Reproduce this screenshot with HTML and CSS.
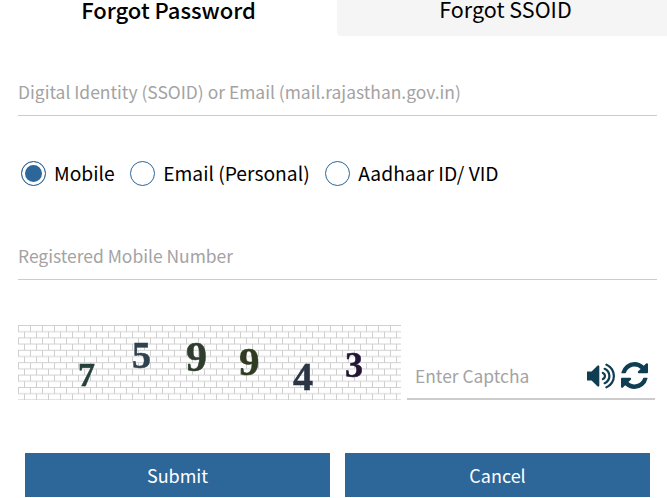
FILE: index.html
```html
<!DOCTYPE html>
<html lang="en">
<head>
  <meta charset="UTF-8" />
  <meta name="viewport" content="width=device-width, initial-scale=1.0"/>
  <title>Forgot Password</title>
  <link rel="stylesheet" href="styles.css">
</head>
<body>

  <div class="tabs">
    <div class="tab active">Forgot Password</div>
    <div class="tab other">Forgot SSOID</div>
  </div>

  <form class="form">
    <input type="text" class="field ssoid" placeholder="Digital Identity (SSOID) or Email (mail.rajasthan.gov.in)" />

    <div class="radios">
      <label class="radio"><input type="radio" name="mode" checked /><span class="dot"></span>Mobile</label>
      <label class="radio"><input type="radio" name="mode" /><span class="dot"></span>Email (Personal)</label>
      <label class="radio"><input type="radio" name="mode" /><span class="dot"></span>Aadhaar ID/ VID</label>
    </div>

    <input type="text" class="field mobile" placeholder="Registered Mobile Number" />

    <div class="captcha-row">
      <div class="captcha">
        <svg class="bricks" width="383" height="75">
          <defs>
            <pattern id="brick" width="24" height="12.4" patternUnits="userSpaceOnUse">
              <path d="M0 .5H24M0 6.7H24M.5 .5V6.7M12.5 .5V6.7M6.5 6.7V12.4M18.5 6.7V12.4" fill="none" stroke="#cfcfcf" stroke-width="1"/>
            </pattern>
          </defs>
          <rect width="383" height="75" fill="#fff"/>
          <rect width="383" height="75" fill="url(#brick)"/>
        </svg>
        <span class="digit d1">7</span>
        <span class="digit d2">5</span>
        <span class="digit d3">9</span>
        <span class="digit d4">9</span>
        <span class="digit d5">4</span>
        <span class="digit d6">3</span>
      </div>
      <div class="captcha-input">
        <input type="text" placeholder="Enter Captcha" />
        <svg class="icon" width="28" height="26" viewBox="128 160 1600 1472"><path d="M832 352v1088q0 26-19 45t-45 19-45-19l-333-333h-262q-26 0-45-19t-19-45v-384q0-26 19-45t45-19h262l333-333q19-19 45-19t45 19 19 45zm384 544q0 76-42.5 141.5t-112.5 93.5q-10 5-25 5-26 0-45-18.5t-19-45.5q0-21 12-35.5t29-25 34-23 29-36 12-56.5-12-56.5-29-36-34-23-29-25-12-35.5q0-27 19-45.5t45-18.5q15 0 25 5 70 27 112.5 93t42.5 142zm256 0q0 153-85 282.5t-225 188.5q-13 5-25 5-27 0-46-19t-19-45q0-39 39-59 56-29 76-44 74-54 115.5-135.5t41.5-173.5-41.5-173.5-115.5-135.5q-20-15-76-44-39-20-39-59 0-26 19-45t45-19q13 0 26 5 140 59 225 188.5t85 282.5zm256 0q0 230-127 422.5t-338 283.5q-13 5-26 5-26 0-45-19t-19-45q0-36 39-59 7-4 22.5-10.5t22.5-10.5q46-25 82-51 123-91 192-227t69-289-69-289-192-227q-36-26-82-51-7-4-22.5-10.5t-22.5-10.5q-39-23-39-59 0-26 19-45t45-19q13 0 26 5 211 91 338 283.5t127 422.5z"/></svg>
        <svg class="icon" width="27" height="27" viewBox="128 128 1536 1536"><path d="M1639 1056q0 5-1 7-64 268-268 434.5t-478 166.5q-146 0-282.5-55t-243.5-157l-129 129q-19 19-45 19t-45-19-19-45v-448q0-26 19-45t45-19h448q26 0 45 19t19 45-19 45l-137 137q71 66 161 102t187 36q134 0 250-65t186-179q11-17 53-117 8-23 30-23h192q13 0 22.5 9.5t9.5 22.5zm25-800v448q0 26-19 45t-45 19h-448q-26 0-45-19t-19-45 19-45l138-138q-148-137-349-137-134 0-250 65t-186 179q-11 17-53 117-8 23-30 23h-199q-13 0-22.5-9.5t-9.5-22.5v-7q65-268 270-434.5t480-166.5q146 0 284 55.5t245 156.5l130-129q19-19 45-19t45 19 19 45z"/></svg>
      </div>
    </div>

    <div class="buttons">
      <button type="button" class="btn">Submit</button>
      <button type="button" class="btn">Cancel</button>
    </div>
  </form>

</body>
</html>
```

FILE: styles.css
```css
body {
  margin: 0;
  font-family: "Noto Sans CJK SC", "Noto Sans", sans-serif;
  background: #fff;
  color: #000;
  overflow: hidden;
}

.tabs {
  display: grid;
  grid-template-columns: 337px 1fr;
  height: 36px;
}

.tab {
  text-align: center;
  font-size: 22px;
  line-height: 18px;
}

.tab.other {
  background: #f5f5f5;
  border-radius: 0 0 0 4px;
  padding-left: 7px;
  font-size: 21.5px;
}

.tab.active {
  font-weight: 500;
}

.form {
  padding: 0 10px 0 18px;
}

.field {
  display: block;
  width: 100%;
  box-sizing: border-box;
  height: 44px;
  padding: 0 0 5px;
  border: none;
  border-bottom: 1px solid #ccc;
  font-family: inherit;
  font-size: 17.45px;
  outline: none;
}

input::placeholder {
  color: #a3a3a3;
  opacity: 1;
}

.ssoid {
  margin-top: 36px;
}

.radios {
  display: flex;
  gap: 15.5px;
  margin: 42px 0 0 3px;
  height: 30px;
}

.radio {
  display: flex;
  align-items: center;
  gap: 8px;
  font-size: 19.25px;
}

.radio input {
  display: none;
}

.dot {
  width: 23px;
  height: 23px;
  border: 1px solid #2d6699;
  border-radius: 50%;
  background: #fff;
}

.radio input:checked + .dot {
  background: #2d6699;
  box-shadow: inset 0 0 0 3px #fff;
}

.mobile {
  margin-top: 48px;
}

.captcha-row {
  display: flex;
  align-items: flex-end;
  gap: 6px;
  margin-top: 45px;
  height: 75px;
}

.captcha {
  position: relative;
  width: 383px;
  height: 75px;
  flex: none;
  filter: blur(0.4px);
}

.bricks {
  display: block;
}

.digit {
  position: absolute;
  font-family: "Liberation Serif", serif;
  font-weight: bold;
  line-height: 1;
  -webkit-text-stroke: 0.5px currentColor;
}

.d1 { left: 60px; top: 33px; font-size: 34px; color: #24403a; }
.d2 { left: 114px; top: 11px; font-size: 38px; color: #2e4250; }
.d3 { left: 168px; top: 11px; font-size: 42px; color: #2f3d2f; }
.d4 { left: 221px; top: 16px; font-size: 41px; color: #2f3c22; }
.d5 { left: 275px; top: 32px; font-size: 40px; color: #2a3644; }
.d6 { left: 327px; top: 22px; font-size: 36px; color: #221434; }

.captcha-input {
  display: flex;
  align-items: center;
  gap: 6px;
  width: 248px;
  height: 50px;
  box-sizing: border-box;
  padding: 3px 7px 0 8px;
  border-bottom: 2px solid #ccc;
}

.captcha-input input {
  flex: 1;
  min-width: 0;
  border: none;
  padding: 0;
  font-family: inherit;
  font-size: 17.4px;
  outline: none;
}

.icon {
  fill: #0f3d52;
  flex: none;
}

.buttons {
  display: flex;
  gap: 15px;
  margin: 53px 0 0 7px;
}

.btn {
  width: 305px;
  height: 44px;
  background: #2d6699;
  color: #fff;
  border: none;
  font-family: inherit;
  font-size: 18px;
}
```
